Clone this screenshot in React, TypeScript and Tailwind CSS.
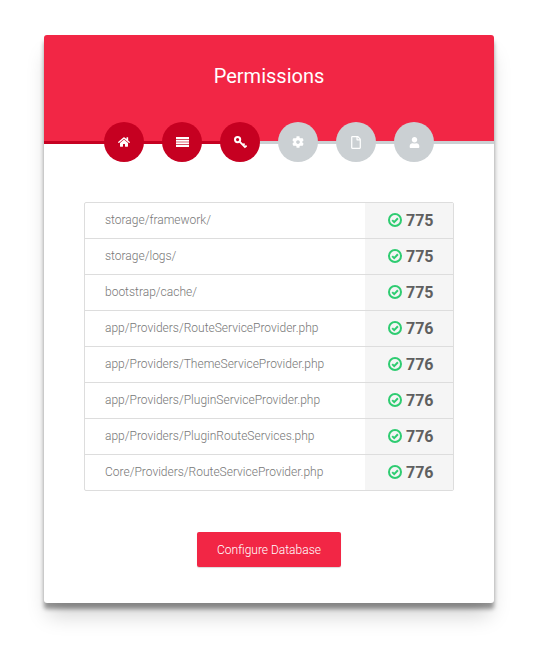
import { FaHome, FaCog, FaRegFile, FaUser } from 'react-icons/fa';

function ListIcon() {
  return (
    <svg viewBox="0 0 13 10" className="w-[13px] h-[10px]" fill="currentColor">
      <rect x="0" y="0" width="13" height="2" />
      <rect x="0" y="2.7" width="13" height="2" />
      <rect x="0" y="5.3" width="13" height="2" />
      <rect x="0" y="8" width="13" height="2" />
    </svg>
  );
}

function KeyIcon() {
  return (
    <svg viewBox="0 0 13 13" className="w-[13px] h-[13px]" fill="none" stroke="currentColor">
      <circle cx="3.6" cy="3.6" r="2.6" strokeWidth="2" />
      <path d="M5.6 5.6L11.5 11.5M9 9L10.6 7.6M11 11L12.6 9.6" strokeWidth="1.8" />
    </svg>
  );
}

function CheckIcon() {
  return (
    <svg viewBox="0 0 14 14" className="w-[14px] h-[14px] text-[#2ecc71]" fill="none" stroke="currentColor">
      <circle cx="7" cy="7" r="6" strokeWidth="2" />
      <path d="M4.2 7.1L6.2 9.1L9.9 5.2" strokeWidth="2" />
    </svg>
  );
}

const steps = [
  { id: 'home', icon: <FaHome className="w-[12px] h-[12px]" />, done: true },
  { id: 'list', icon: <ListIcon />, done: true },
  { id: 'key', icon: <KeyIcon />, done: true },
  { id: 'cog', icon: <FaCog className="w-[12px] h-[12px]" />, done: false },
  { id: 'file', icon: <FaRegFile className="w-[12px] h-[13px]" />, done: false },
  { id: 'user', icon: <FaUser className="w-[11px] h-[11px]" />, done: false },
];

const permissions = [
  { path: 'storage/framework/', mode: 775 },
  { path: 'storage/logs/', mode: 775 },
  { path: 'bootstrap/cache/', mode: 775 },
  { path: 'app/Providers/RouteServiceProvider.php', mode: 776 },
  { path: 'app/Providers/ThemeServiceProvider.php', mode: 776 },
  { path: 'app/Providers/PluginServiceProvider.php', mode: 776 },
  { path: 'app/Providers/PluginRouteServices.php', mode: 776 },
  { path: 'Core/Providers/RouteServiceProvider.php', mode: 776 },
];

export default function App() {
  return (
    <div className="w-[540px] h-[650px] bg-white pt-[35px] pl-[44px] font-['Roboto',sans-serif]">
      <div className="w-[450px] h-[568px] bg-white rounded-[3px] shadow-[0_6px_4px_0_rgba(0,0,0,0.38),0_16px_20px_-4px_rgba(0,0,0,0.18)]">
        {/* Header */}
        <div className="h-[106px] bg-[#f22645] rounded-t-[3px] pt-[26px] text-center">
          <h1 className="text-[20px] leading-[30px] text-white">Permissions</h1>
        </div>
        <div className="flex h-[3px]">
          <div className="w-[196px] bg-[#c60021]" />
          <div className="flex-1 bg-[#cbd0d3]" />
        </div>

        {/* Steps */}
        <div className="relative -mt-[22px] flex pl-[60px] gap-[18px]">
          {steps.map((step) => (
            <div
              key={step.id}
              className={
                step.done
                  ? 'w-[40px] h-[40px] rounded-full flex items-center justify-center text-white bg-[#c60021]'
                  : 'w-[40px] h-[40px] rounded-full flex items-center justify-center text-white bg-[#cbd0d3]'
              }
            >
              {step.icon}
            </div>
          ))}
        </div>

        {/* Table */}
        <div className="mt-[40px] mx-[40px] border border-[#dddddd] rounded-[2px]">
          {permissions.map((row, i) => (
            <div
              key={row.path}
              className={i === 0 ? 'flex h-[35px]' : 'flex h-[36px] border-t border-[#dddddd]'}
            >
              <div className="flex-1 pl-[20px] text-[12px] font-light leading-[34px] text-[#777777]">{row.path}</div>
              <div className="w-[88px] bg-[#f5f5f5] flex items-center pl-[23px] pb-[1px] gap-[4px]">
                <CheckIcon />
                <span className="pt-[2px] text-[16px] font-bold text-[#5f5f5f]">{row.mode}</span>
              </div>
            </div>
          ))}
        </div>

        {/* Action */}
        <div className="mt-[41px] flex justify-center">
          <button className="w-[144px] h-[35px] bg-[#f22645] rounded-[2px] text-[12px] font-light text-white shadow-[0_1px_1px_rgba(0,0,0,0.15)]">
            Configure Database
          </button>
        </div>
      </div>
    </div>
  );
}
